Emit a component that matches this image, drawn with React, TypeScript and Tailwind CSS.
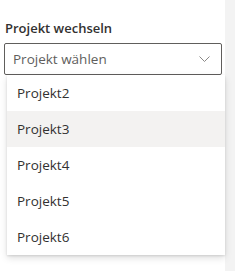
import { useState } from 'react'

const PROJECTS = ['Projekt2', 'Projekt3', 'Projekt4', 'Projekt5', 'Projekt6']

function Chevron() {
  return (
    <svg width="11" height="6" viewBox="0 0 11 6" fill="none" className="text-[#8a8886]">
      <path d="M0.5 0.5L5.5 5.5L10.5 0.5" stroke="currentColor" strokeWidth="1" />
    </svg>
  )
}

export default function App() {
  const [hovered] = useState('Projekt3')

  return (
    <div
      className="flex h-[271px] w-[235px] bg-[#f3f3f3]"
      style={{ fontFamily: '"Open Sans", "Noto Sans", sans-serif' }}
    >
      <div className="relative w-[225px] bg-white pt-[18px]">
        <label className="block px-[5px] text-[13px] font-semibold leading-[20px] text-[#323130]">
          Projekt wechseln
        </label>

        {/* Dropdown */}
        <div className="relative mt-[5px] ml-[4px] w-[218px]">
          <div className="flex h-[32px] items-center justify-between rounded-[2px] border border-[#605e5c] bg-white pl-[8px] pr-[11px]">
            <span className="text-[13.5px] text-[#605e5c]">Projekt wählen</span>
            <Chevron />
          </div>

          {/* List */}
          <div className="absolute left-[3px] top-[32px] w-[218px] bg-white shadow-[0_3px_7px_rgba(0,0,0,0.13),0_1px_2px_rgba(0,0,0,0.11)]">
            {PROJECTS.map(p => (
              <div
                key={p}
                className={`flex h-[36px] items-center px-[10px] text-[13.5px] text-[#323130] ${
                  p === hovered ? 'bg-[#f3f2f1]' : 'bg-white'
                }`}
              >
                {p}
              </div>
            ))}
          </div>
        </div>
      </div>
      <div className="flex-1" />
    </div>
  )
}
